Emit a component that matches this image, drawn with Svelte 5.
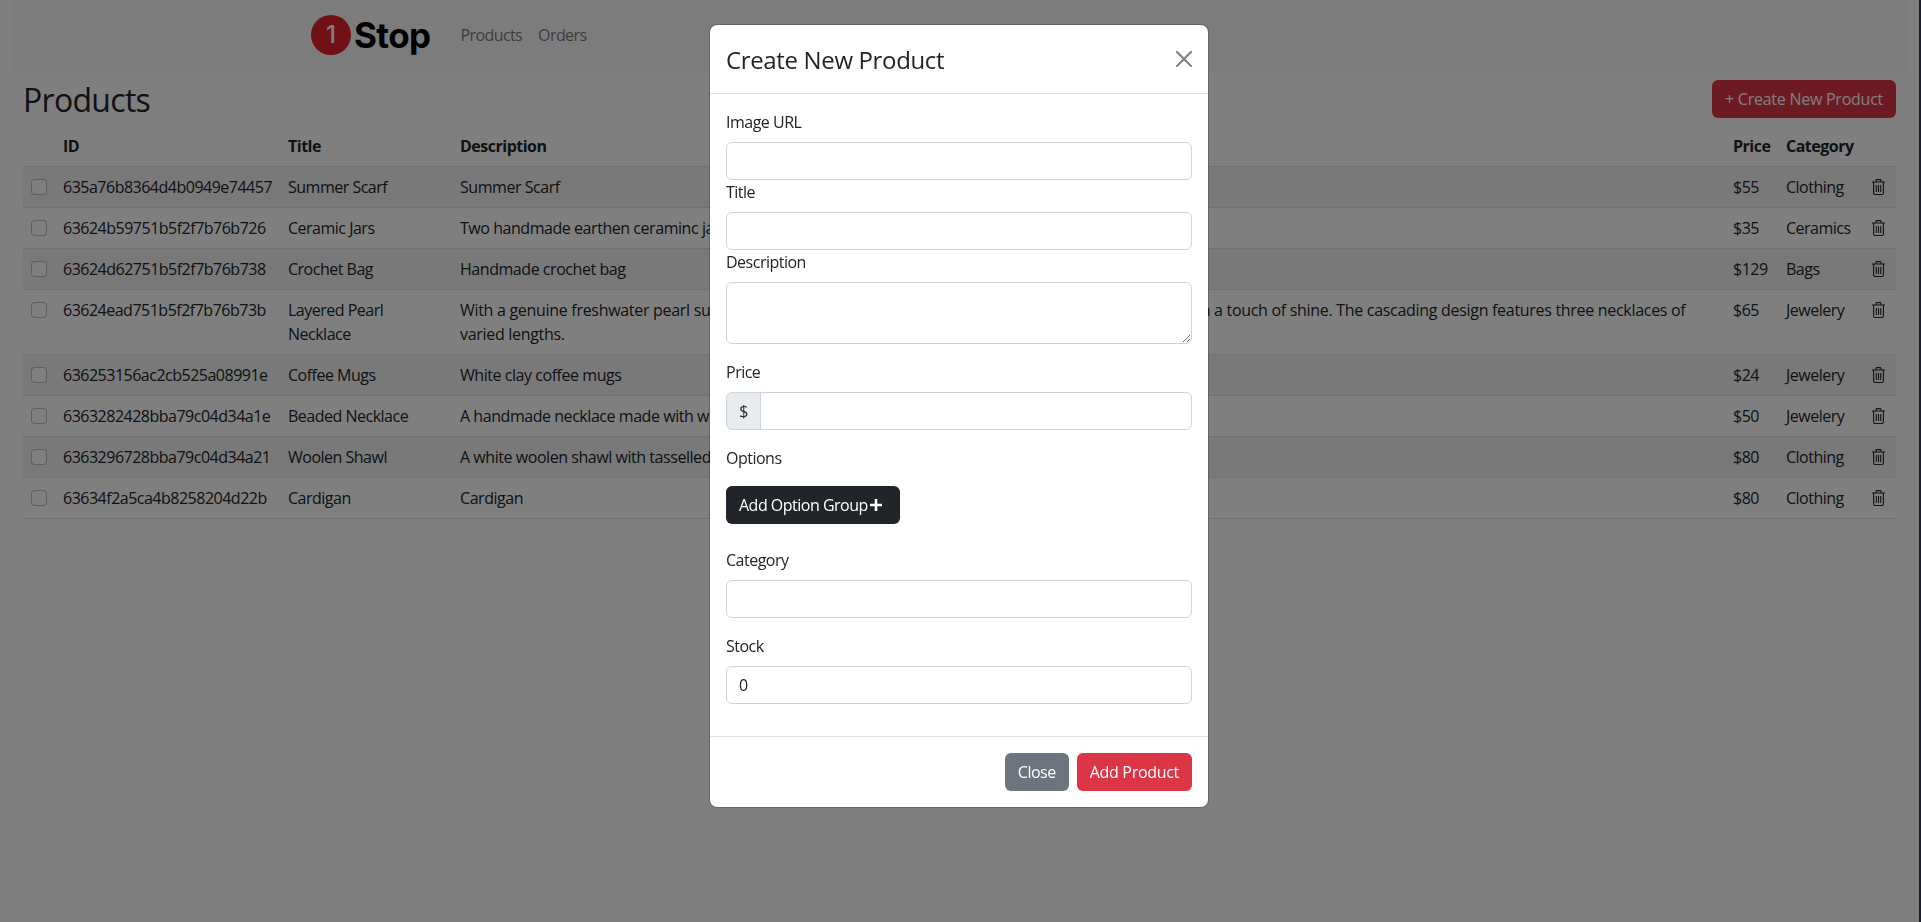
<script>
  const rows = [
    { id: '635a76b8364d4b0949e74457', title: 'Summer Scarf', desc: 'Summer Scarf', price: 55, cat: 'Clothing' },
    { id: '63624b59751b5f2f7b76b726', title: 'Ceramic Jars', desc: 'Two handmade earthen ceraminc jars', price: 35, cat: 'Ceramics' },
    { id: '63624d62751b5f2f7b76b738', title: 'Crochet Bag', desc: 'Handmade crochet bag', price: 129, cat: 'Bags' },
    { id: '63624ead751b5f2f7b76b73b', title: 'Layered Pearl Necklace', desc: 'With a genuine freshwater pearl suspended on a delicate gold chain, this necklace finishes any outfit with a touch of shine. The cascading design features three necklaces of varied lengths.', price: 65, cat: 'Jewelery' },
    { id: '636253156ac2cb525a08991e', title: 'Coffee Mugs', desc: 'White clay coffee mugs', price: 24, cat: 'Jewelery' },
    { id: '6363282428bba79c04d34a1e', title: 'Beaded Necklace', desc: 'A handmade necklace made with white beads', price: 50, cat: 'Jewelery' },
    { id: '6363296728bba79c04d34a21', title: 'Woolen Shawl', desc: 'A white woolen shawl with tasselled ends', price: 80, cat: 'Clothing' },
    { id: '63634f2a5ca4b8258204d22b', title: 'Cardigan', desc: 'Cardigan', price: 80, cat: 'Clothing' }
  ];
</script>

<div class="page">
  <nav class="navbar">
    <a class="brand" href="#top"><span class="one">1</span><span class="stop">Stop</span></a>
    <a class="link" href="#products">Products</a>
    <a class="link" href="#orders">Orders</a>
  </nav>

  <main class="content">
    <header class="head">
      <h2>Products</h2>
      <button class="btn danger create">+ Create New Product</button>
    </header>
    <table>
      <colgroup>
        <col class="c-check" /><col class="c-id" /><col class="c-title" /><col />
        <col class="c-price" /><col class="c-cat" /><col class="c-del" />
      </colgroup>
      <thead>
        <tr><th></th><th>ID</th><th>Title</th><th>Description</th><th>Price</th><th>Category</th><th></th></tr>
      </thead>
      <tbody>
        {#each rows as r}
          <tr>
            <td><input class="check" type="checkbox" /></td>
            <td>{r.id}</td>
            <td>{r.title}</td>
            <td class="desc" class:long={r.desc.length > 100}>{r.desc}</td>
            <td>${r.price}</td>
            <td>{r.cat}</td>
            <td>
              <svg class="trash" viewBox="0 0 13 16" width="13" height="16" fill="none" stroke="currentColor" stroke-width="1.1">
                <path d="M0 3h13M4 3V1.500Q4 .6 4.900 .6h3.200q.9 0 .9 .9V3M1.600 3v11q0 1.500 1.500 1.500h6.800q1.500 0 1.500-1.500V3M4.300 6v7M6.500 6v7M8.700 6v7" />
              </svg>
            </td>
          </tr>
        {/each}
      </tbody>
    </table>
  </main>
</div>

<div class="backdrop"></div>
<div class="edge"></div>

<div class="overlay">
  <div class="modal">
    <div class="modal-head">
      <h5>Create New Product</h5>
      <svg class="close" viewBox="0 0 16 16" width="16" height="16" fill="#000">
        <path d="M.293.293a1 1 0 0 1 1.414 0L8 6.586 14.293.293a1 1 0 1 1 1.414 1.414L9.414 8l6.293 6.293a1 1 0 0 1-1.414 1.414L8 9.414l-6.293 6.293a1 1 0 0 1-1.414-1.414L6.586 8 .293 1.707a1 1 0 0 1 0-1.414z" />
      </svg>
    </div>
    <form class="modal-body">
      <label for="img">Image URL</label>
      <input id="img" class="field" type="text" />
      <label for="ttl">Title</label>
      <input id="ttl" class="field" type="text" />
      <label for="dsc">Description</label>
      <textarea id="dsc" class="field area"></textarea>
      <label class="spaced" for="prc">Price</label>
      <div class="group">
        <span class="addon">$</span>
        <input id="prc" class="field" type="text" />
      </div>
      <span class="label spaced">Options</span>
      <button type="button" class="btn dark">Add Option Group<svg viewBox="0 0 14 14" width="14" height="14" fill="#fff"><path d="M5.700 1h2.600v4.700H13v2.600H8.300V13H5.700V8.300H1V5.700h4.700z" /></svg></button>
      <label class="spaced-lg" for="cat">Category</label>
      <input id="cat" class="field" type="text" />
      <label class="spaced" for="stk">Stock</label>
      <input id="stk" class="field" type="text" value="0" />
    </form>
    <div class="modal-foot">
      <button class="btn gray">Close</button>
      <button class="btn danger">Add Product</button>
    </div>
  </div>
</div>

<style>
  :global(body) {
    margin: 0;
    background: #fff;
    color: #212529;
    font-family: "Open Sans", "Noto Sans", sans-serif;
    font-size: 16px;
    line-height: 24px;
    letter-spacing: -0.5px;
    overflow: hidden;
  }
  .page {
    height: 922px;
    padding: 0 13px;
  }
  .navbar {
    width: 1894px;
    height: 71px;
    box-sizing: border-box;
    background: #f8f9fa;
    display: flex;
    align-items: center;
    padding-left: 298px;
    padding-bottom: 2px;
  }
  .brand {
    display: flex;
    align-items: center;
    width: 149.500px;
    color: #000;
    text-decoration: none;
  }
  .one {
    width: 40px;
    height: 40px;
    border-radius: 50%;
    background: #e2202a;
    color: #fff;
    font-family: Inter, sans-serif;
    font-size: 24px;
    font-weight: 500;
    letter-spacing: 0;
    display: flex;
    align-items: center;
    justify-content: center;
    flex: none;
  }
  .stop {
    margin-left: 3px;
    font-family: Inter, sans-serif;
    font-size: 35px;
    font-weight: 700;
    line-height: 40px;
    letter-spacing: -0.6px;
  }
  .link {
    color: rgba(0, 0, 0, 0.55);
    text-decoration: none;
    margin-right: 16px;
    letter-spacing: -0.6px;
  }
  .content {
    width: 1873px;
    margin-left: 10px;
  }
  .head {
    display: flex;
    justify-content: space-between;
    align-items: center;
    margin-top: 9px;
    margin-bottom: 8px;
    height: 38px;
  }
  h2 {
    margin: 0;
    font-size: 32px;
    font-weight: 500;
    line-height: 38px;
    letter-spacing: -0.7px;
    padding-top: 2px;
  }
  .btn {
    height: 38px;
    box-sizing: border-box;
    border: 1px solid transparent;
    border-radius: 6px;
    padding: 0 12px;
    font: inherit;
    letter-spacing: -0.3px;
    color: #fff;
    display: inline-flex;
    align-items: center;
  }
  .danger { background: #dc3545; }
  .create { letter-spacing: -0.25px; }
  .dark { background: #212529; width: 174px; letter-spacing: -0.5px; }
  .dark svg { margin-left: 1px; flex: none; }
  .gray { background: #6c757d; letter-spacing: -0.5px; }
  table {
    width: 100%;
    table-layout: fixed;
    border-collapse: collapse;
  }
  .c-check { width: 32px; }
  .c-id { width: 225px; }
  .c-title { width: 172px; }
  .c-price { width: 53px; }
  .c-cat { width: 86px; }
  .c-del { width: 32px; }
  th, td {
    padding: 8px;
    text-align: left;
    vertical-align: top;
    border-bottom: 1px solid #dee2e6;
  }
  th { font-weight: 700; }
  .desc { letter-spacing: -0.45px; }
  .desc.long { letter-spacing: -0.3px; }
  tbody tr:nth-child(odd) td { background: rgba(0, 0, 0, 0.05); }
  .check {
    appearance: none;
    display: block;
    width: 16px;
    height: 16px;
    margin: 4px 0 0;
    background: #fff;
    border: 1px solid rgba(0, 0, 0, 0.25);
    border-radius: 4px;
    box-sizing: border-box;
  }
  .trash {
    display: block;
    margin-top: 4px;
    color: #212529;
  }
  .backdrop {
    position: fixed;
    inset: 0;
    background: rgba(0, 0, 0, 0.5);
  }
  .edge {
    position: fixed;
    top: 0;
    bottom: 0;
    right: 0;
    width: 2px;
    background: #1c1d2b;
  }
  .overlay {
    position: fixed;
    top: 0;
    left: 0;
    width: 1918px;
    display: flex;
    justify-content: center;
    padding-top: 24px;
  }
  .modal {
    width: 500px;
    box-sizing: border-box;
    background: #fff;
    background-clip: padding-box;
    border: 1px solid rgba(0, 0, 0, 0.2);
    border-radius: 8px;
  }
  .modal-head {
    display: flex;
    align-items: center;
    justify-content: space-between;
    padding: 16px;
    border-bottom: 1px solid #dee2e6;
    height: 69px;
    box-sizing: border-box;
  }
  h5 {
    margin: 0;
    padding-top: 2px;
    font-size: 24px;
    font-weight: 500;
    line-height: 36px;
    letter-spacing: -0.35px;
  }
  .close {
    opacity: 0.5;
  }
  .modal-body {
    padding: 16px 16px 16px;
    display: flex;
    flex-direction: column;
    align-items: flex-start;
    height: 642px;
    box-sizing: border-box;
  }
  label, .label {
    display: block;
    margin-bottom: 8px;
  }
  .spaced { margin-top: 16px; }
  .spaced-lg { margin-top: 24px; }
  .label + .btn { margin-top: 8px; }
  .field {
    width: 100%;
    height: 38px;
    box-sizing: border-box;
    border: 1px solid #ced4da;
    border-radius: 6px;
    padding: 0 12px;
    font: inherit;
    letter-spacing: inherit;
    color: #212529;
    background: #fff;
    margin: 0;
    flex: none;
  }
  .area {
    height: 62px;
    display: block;
  }
  .group {
    width: 100%;
    display: flex;
  }
  .addon {
    width: 35px;
    flex: none;
    box-sizing: border-box;
    background: #e9ecef;
    border: 1px solid #ced4da;
    border-radius: 6px 0 0 6px;
    display: flex;
    align-items: center;
    justify-content: center;
  }
  .group .field {
    flex: 1;
    width: auto;
    min-width: 0;
    margin-left: -1px;
    border-radius: 0 6px 6px 0;
  }
  .modal-foot {
    display: flex;
    justify-content: flex-end;
    gap: 8px;
    padding: 16px;
    border-top: 1px solid #dee2e6;
  }
</style>
